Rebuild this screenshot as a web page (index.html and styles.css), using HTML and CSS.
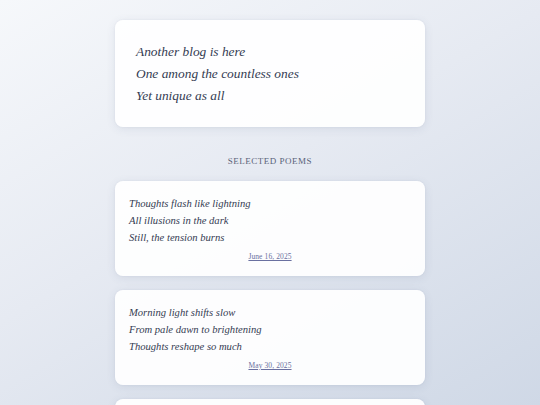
FILE: index.html
```html
<!DOCTYPE html>
<html>
<head>
<meta charset="utf-8">
<link rel="stylesheet" href="styles.css">
</head>
<body>
<main class="page">
  <section class="intro card">
    <p>Another blog is here</p>
    <p>One among the countless ones</p>
    <p>Yet unique as all</p>
  </section>
  <h2 class="section-title">SELECTED POEMS</h2>
  <article class="poem card">
    <div class="lines">
      <p>Thoughts flash like lightning</p>
      <p>All illusions in the dark</p>
      <p>Still, the tension burns</p>
    </div>
    <a class="date" href="#">June 16, 2025</a>
  </article>
  <article class="poem card">
    <div class="lines">
      <p>Morning light shifts slow</p>
      <p>From pale dawn to brightening</p>
      <p>Thoughts reshape so much</p>
    </div>
    <a class="date" href="#">May 30, 2025</a>
  </article>
  <article class="poem card">
    <div class="lines">
      <p>Quiet rain at night</p>
      <p>Whispers on the window glass</p>
      <p>Sleep comes drifting in</p>
    </div>
    <a class="date" href="#">May 12, 2025</a>
  </article>
</main>
</body>
</html>
```
FILE: styles.css
```css
html, body {
  margin: 0;
  padding: 0;
}
html {
  height: 405px;
  overflow: hidden;
}
body {
  height: 405px;
  background: linear-gradient(150deg, #f6f8fb 0%, #e6eaf2 45%, #cfd8e6 100%);
  font-family: "Liberation Serif", "DejaVu Serif", serif;
  color: #343c52;
  overflow: hidden;
}
.page {
  width: 310px;
  margin: 20px auto 0;
  display: flex;
  flex-direction: column;
}
.card {
  background: rgba(255, 255, 255, 0.92);
  border-radius: 8px;
  box-shadow: 0 2px 10px rgba(60, 80, 120, 0.10), 0 0 2px rgba(60, 80, 120, 0.08);
}
p {
  margin: 0;
}
.intro {
  padding: 21px 21px 20px;
  font-style: italic;
  font-size: 13.4px;
  line-height: 22px;
}
.section-title {
  margin: 27px 0 13px;
  text-align: center;
  font-weight: normal;
  font-size: 9px;
  line-height: 14px;
  letter-spacing: 0.5px;
  color: #5a6379;
}
.poem {
  padding: 14px 14px 13px;
  margin-bottom: 14px;
  display: flex;
  flex-direction: column;
}
.lines {
  font-style: italic;
  font-size: 10.6px;
  line-height: 17px;
}
.date {
  margin-top: 5px;
  align-self: center;
  font-size: 7.5px;
  line-height: 12px;
  color: #6a70a0;
  letter-spacing: 0.1px;
}
```
